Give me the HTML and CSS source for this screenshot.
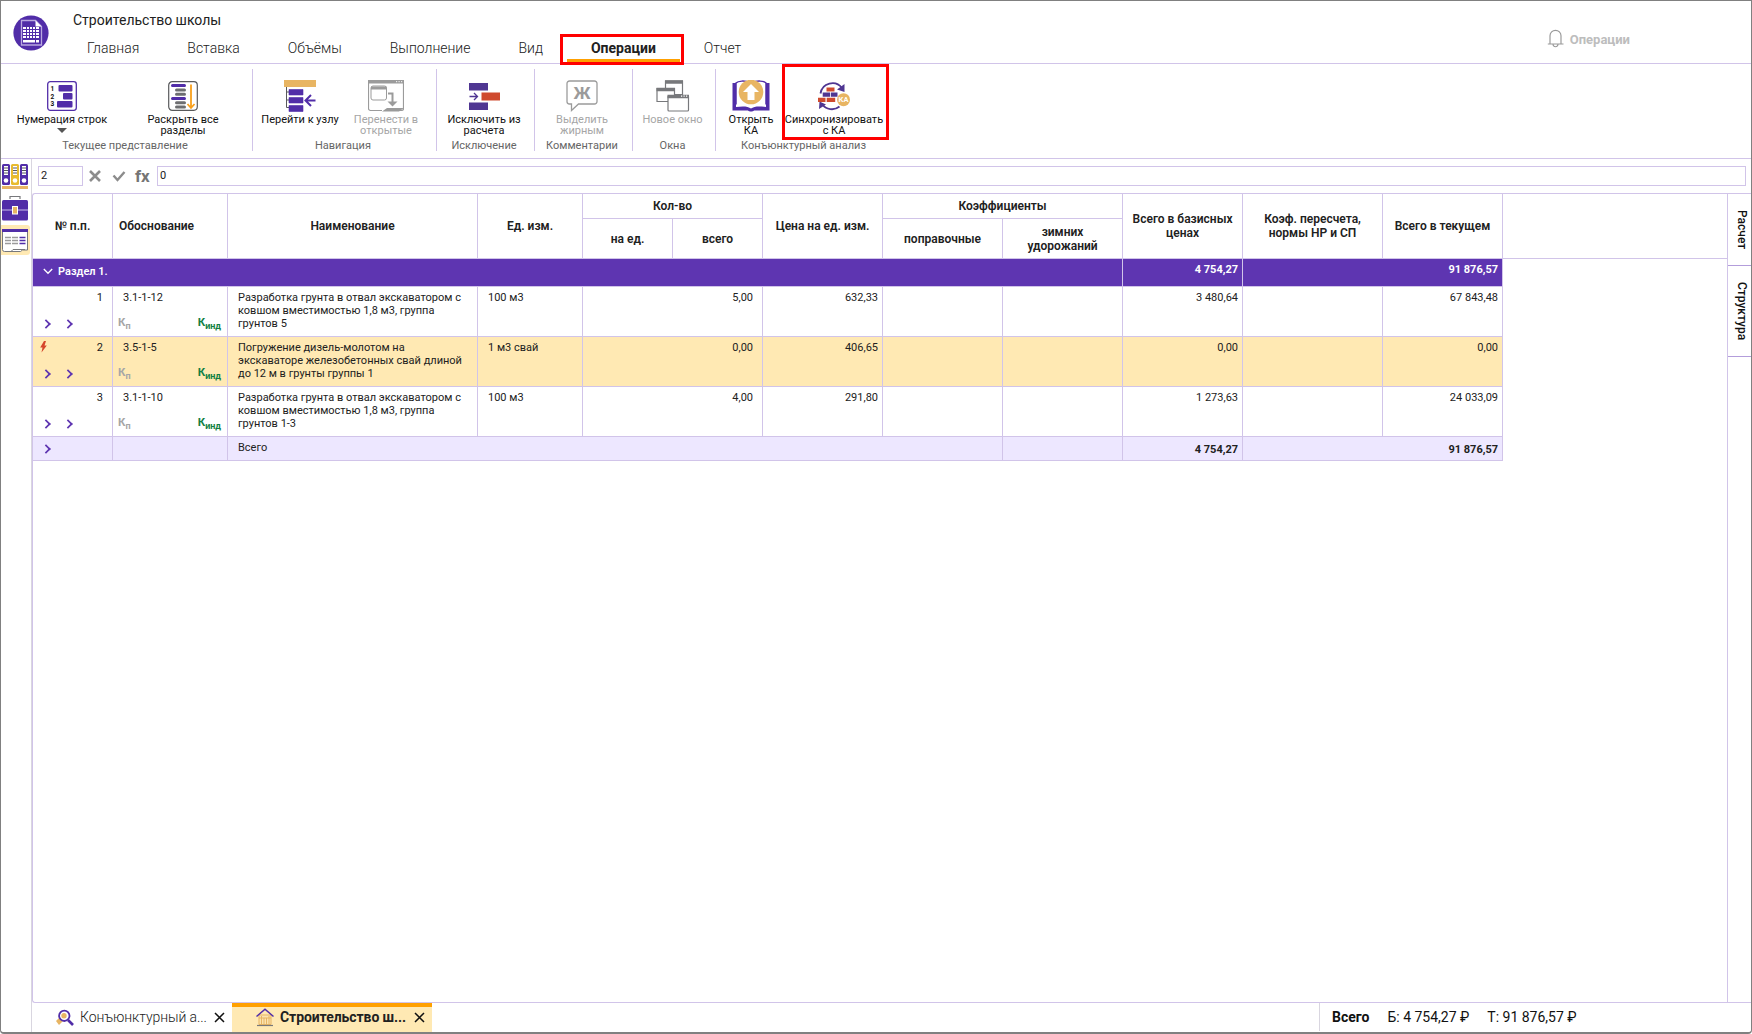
FILE: index.html
```html
<!DOCTYPE html>
<html lang="ru">
<head>
    <meta charset="UTF-8">
    <title>Строительство школы</title>
    <link rel="stylesheet" href="styles.css">
</head>
<body>
<div class="window">
    <header class="header">
        <svg class="logo" width="36" height="36" viewBox="0 0 36 36">
            <circle cx="18" cy="18" r="17.6" fill="#512da8"/>
            <path d="M8.500 5.500h14l6 6v18.500h-20z" fill="none" stroke="#b9a8e0" stroke-width="1.300"/>
            <path d="M22.500 5.500v6h6z" fill="#fff"/>
            <path d="M10 12h16v11h-16zM10 25h16v2.500h-16z" fill="#fff"/>
            <path d="M10 14.500h16M10 17.500h16M10 20.500h16M13.500 12v11M16.500 12v11M19.500 12v11M22.500 12v16" stroke="#512da8" stroke-width="1"/>
        </svg>
        <div class="header-main">
            <div class="title">Строительство школы</div>
            <nav class="menu">
                <a>Главная</a>
                <a>Вставка</a>
                <a>Объёмы</a>
                <a>Выполнение</a>
                <a>Вид</a>
                <a class="active">Операции</a>
                <a>Отчет</a>
            </nav>
        </div>
        <div class="notify">
            <svg width="18" height="19" viewBox="0 0 18 19" fill="none" stroke="#9a9a9a" stroke-width="1.200">
                <path d="M.8 15h15.700M3 15V6.800a5.500 5.500 0 0 1 11 0V15M6 15.500c.5 3 4.500 3 5 0"/>
            </svg>
            <span>Операции</span>
        </div>
    </header>

    <!-- Ribbon -->
    <div class="ribbon">
        <div class="group g-view">
            <div class="buttons">
                <div class="btn">
                    <svg width="32" height="32" viewBox="0 0 32 32">
                        <rect x="1.700" y="1.700" width="28.600" height="28.600" rx="2.500" fill="#fff" stroke="#512da8" stroke-width="1.300"/>
                        <g fill="#512da8"><rect x="12.500" y="5" width="14" height="6.500" rx="1"/><rect x="17" y="13" width="9.500" height="6.500" rx="1"/><rect x="11" y="21" width="15.500" height="6.500" rx="1"/></g>
                        <g class="ico-num"><text x="4.500" y="11">1</text><text x="4.500" y="18.500">2</text><text x="4.500" y="26">3</text></g>
                    </svg>
                    <span>Нумерация строк</span>
                    <i class="caret"></i>
                </div>
                <div class="btn">
                    <svg width="32" height="32" viewBox="0 0 32 32">
                        <rect x="1.700" y="1.700" width="28.600" height="28.600" rx="3.500" fill="#fff" stroke="#58595b" stroke-width="1.200"/>
                        <path d="M5.500 5.500h12M5.500 18.500h12" stroke="#512da8" stroke-width="3" stroke-linecap="round"/>
                        <path d="M9.500 10h8M9.500 14.200h8M9.500 22.800h8M9.500 27h8" stroke="#6d6e71" stroke-width="3" stroke-linecap="round"/>
                        <path d="M24 4.500v23M20.500 24l3.500 4 3.500-4" fill="none" stroke="#f9a01b" stroke-width="1.800"/>
                    </svg>
                    <span>Раскрыть все<br>разделы</span>
                </div>
            </div>
            <div class="caption">Текущее представление</div>
        </div>
        <div class="group g-nav">
            <div class="buttons">
                <div class="btn">
                    <svg width="32" height="32" viewBox="0 0 32 32">
                        <rect width="32" height="7" fill="#e8b563"/>
                        <path d="M2.500 7v20.500h3M2.500 12h3M2.500 20h3" fill="none" stroke="#58595b"/>
                        <path d="M5 9.500h14v5.500h-14zM5 17.500h14v5.500h-14zM5 25.500h14v6h-14z" fill="#512da8" stroke="#512da8" stroke-width=".6"/>
                        <path d="M31.500 20.500h-10M27 15l-5.500 5.500 5.500 5.500" fill="none" stroke="#512da8" stroke-width="2"/>
                    </svg>
                    <span>Перейти к узлу</span>
                </div>
                <div class="btn disabled">
                    <svg width="36" height="32" viewBox="0 0 36 32" fill="none" stroke="#9b9b9b">
                        <path d="M14 30.500H2.500a2 2 0 0 1-2-2V1h35v27.500a2 2 0 0 1-2 2H28" stroke-width="1.200"/>
                        <path d="M0 0h36v3.500H0zM14 31.500l5-3.500h17l-5 3.500z" fill="#9b9b9b" stroke="none"/>
                        <path d="M28 1.700h1.200M30.500 1.700h1.200M33 1.700h1.200" stroke="#fff"/>
                        <rect x="3" y="6" width="15.500" height="14" rx="2"/>
                        <path d="M3 8h15.500" stroke-width="3"/>
                        <path d="M20 13.500h4.500v10" stroke-width="2"/><path d="M19.500 21.500h10l-5 5z" fill="#9b9b9b" stroke="none"/>
                    </svg>
                    <span>Перенести в<br>открытые</span>
                </div>
            </div>
            <div class="caption">Навигация</div>
        </div>
        <div class="group g-excl">
            <div class="buttons">
                <div class="btn">
                    <svg width="32" height="32" viewBox="0 0 32 32">
                        <path d="M1 3h19v7.500H1zM1 22.500h19V30H1z" fill="#4f3692"/>
                        <rect x="13.500" y="12.500" width="18.500" height="8" fill="#cf4a2e"/>
                        <path d="M1.500 16.500h8M6 13l3.500 3.500L6 20" fill="none" stroke="#4f3692" stroke-width="1.300"/>
                    </svg>
                    <span>Исключить из<br>расчета</span>
                </div>
            </div>
            <div class="caption">Исключение</div>
        </div>
        <div class="group g-comm">
            <div class="buttons">
                <div class="btn disabled">
                    <svg width="32" height="32" viewBox="0 0 32 32">
                        <path d="M3.500 1h25a2.500 2.500 0 0 1 2.500 2.500v18a2.500 2.500 0 0 1-2.500 2.500H12.500l-7 6.500V24h-2A2.500 2.500 0 0 1 1 21.500v-18A2.500 2.500 0 0 1 3.500 1z" fill="#fff" stroke="#9b9b9b" stroke-width="1.300"/>
                        <text class="ico-bold" x="16" y="18.500">Ж</text>
                    </svg>
                    <span>Выделить<br>жирным</span>
                </div>
            </div>
            <div class="caption">Комментарии</div>
        </div>
        <div class="group g-win">
            <div class="buttons">
                <div class="btn disabled">
                    <svg width="34" height="32" viewBox="0 0 34 32" fill="#fff" stroke="#77787b" stroke-width="1.200">
                        <path d="M9.500 1h17v13.500h-17z"/><path d="M9 2h18" stroke-width="3.500"/>
                        <path d="M1 8.500h17.500v13H1z"/><path d="M.5 9.500H19" stroke-width="3.500"/>
                        <rect x="12" y="15.500" width="20.500" height="15.500" rx="1"/><path d="M11.500 16.500h21.500" stroke-width="3.500"/>
                        <path d="M25 16.200h1.200M27.500 16.200h1.200M30 16.200h1.200" stroke="#fff"/>
                    </svg>
                    <span>Новое окно</span>
                </div>
            </div>
            <div class="caption">Окна</div>
        </div>
        <div class="group g-ka">
            <div class="buttons">
                <div class="btn">
                    <svg width="38" height="32" viewBox="0 0 38 32">
                        <path d="M.5 3H4V27c6-1 12-1 15 1.500C22 26 28 26 34 27V3h3.500v27.500H22c-1 1.300-5 1.300-6 0H.5z" fill="#512da8"/>
                        <path d="M4 24.500V3C6 1 13 0 18 3M34 24.500V3C32 1 25 0 20 3" fill="none" stroke="#512da8" stroke-width="1.500"/>
                        <circle cx="19" cy="12" r="12.300" fill="#e8b563"/>
                        <path d="M19 4l8 8h-4.500v8h-7v-8H11z" fill="#fff"/>
                    </svg>
                    <span>Открыть<br>КА</span>
                </div>
                <div class="btn">
                    <svg width="32" height="32" viewBox="0 0 32 32">
                        <path d="M2.500 13.500A12 12 0 0 1 24 8M21.500 26.500A12 12 0 0 1 4 24" fill="none" stroke="#4f3692" stroke-width="1.800"/>
                        <path d="M26.500 4v8l-7.500-2.500zM1 29l.5-7.500 6.500 3z" fill="#4f3692"/>
                        <path d="M8.500 7.500h8v4h-8zM0 17.700h7.500V22H0zM8.700 17.700h8.500V22H8.700z" fill="#cf4a2e"/>
                        <path d="M4.700 12.500h7.500v4.200H4.700zM13 12.500h6.500v4.200H13z" fill="#4f3692"/>
                        <circle cx="25.500" cy="19.700" r="6.500" fill="#e8b563"/>
                        <text class="ico-ka" x="25.500" y="22.300">КА</text>
                    </svg>
                    <span>Синхронизировать<br>с КА</span>
                </div>
            </div>
            <div class="caption">Конъюнктурный анализ</div>
        </div>
    </div>

    <div class="workspace">
        <aside class="rail">
            <div class="rail-item">
                <svg width="26" height="26" viewBox="0 0 26 26">
                    <rect x="0" y="0" width="8" height="21" rx="1.500" fill="#512da8"/><rect x="9" y="0" width="8" height="21" rx="1.500" fill="#e8bb2e"/><rect x="18" y="0" width="8" height="21" rx="1.500" fill="#512da8"/>
                    <path d="M2 2h4v9H2zM11 2h4v9h-4zM20 2h4v9h-4z" fill="#fff"/>
                    <path d="M2 4h4M2 6.500h4M2 9h4M11 4h4M11 6.500h4M11 9h4M20 4h4M20 6.500h4M20 9h4" stroke="#58595b"/>
                    <g fill="#fff"><circle cx="4" cy="16.500" r="2.300"/><circle cx="13" cy="16.500" r="2.300"/><circle cx="22" cy="16.500" r="2.300"/></g>
                    <rect y="22" width="26" height="3" fill="#e8b563"/>
                </svg>
            </div>
            <div class="rail-item">
                <svg width="26" height="26" viewBox="0 0 26 26">
                    <path d="M8 4V1.500h10V4" fill="none" stroke="#77787b" stroke-width="1.200"/>
                    <rect y="5" width="26" height="20.500" rx="1.500" fill="#512da8"/>
                    <path d="M0 15h26" stroke="#c9bdea" stroke-width="1"/>
                    <rect x="10.500" y="11.500" width="5" height="7.500" fill="#e8b563" stroke="#fff"/>
                </svg>
            </div>
            <div class="rail-item current">
                <svg width="26" height="26" viewBox="0 0 26 26">
                    <path d="M.5 3h25v19h-5l-2 1.500H2.500a2 2 0 0 1-2-2z" fill="#fff" stroke="#77787b"/>
                    <path d="M0 1h26v3H0z" fill="#512da8"/>
                    <path d="M3 9.500h6M3 12.500h6M3 15.500h6M10 9.500h6M10 12.500h6M10 15.500h6" stroke="#9b9b9b" stroke-width="1.300"/>
                    <path d="M17.500 9.500h6M17.500 12.500h6M17.500 15.500h6" stroke="#512da8" stroke-width="1.600"/>
                    <path d="M9 23.500l2-2h12" fill="none" stroke="#77787b"/>
                </svg>
            </div>
        </aside>

        <div class="content">
            <div class="formula">
                <div class="cell-no">2</div>
                <svg class="f-cancel" width="14" height="14" viewBox="0 0 14 14"><path d="M2 2l10 10M12 2L2 12" stroke="#8c8c8c" stroke-width="2.600"/></svg>
                <svg class="f-ok" width="14" height="12" viewBox="0 0 14 12"><path d="M1.500 5.500l4 4.500 7-8" fill="none" stroke="#8c8c8c" stroke-width="2.400"/></svg>
                <span class="fx">fx</span>
                <div class="f-input">0</div>
            </div>

            <div class="panels">
                <div class="sheet">
                    <div class="filler"></div>
                    <table class="grid">
                        <colgroup>
                            <col class="w80"><col class="w115"><col class="w250"><col class="w105"><col class="w90"><col class="w90">
                            <col class="w120"><col class="w120"><col class="w120"><col class="w120"><col class="w140"><col class="w120">
                        </colgroup>
                        <thead>
                            <tr class="h1">
                                <th rowspan="2">№ п.п.</th>
                                <th rowspan="2" class="left">Обоснование</th>
                                <th rowspan="2">Наименование</th>
                                <th rowspan="2">Ед. изм.</th>
                                <th colspan="2">Кол-во</th>
                                <th rowspan="2">Цена на ед. изм.</th>
                                <th colspan="2">Коэффициенты</th>
                                <th rowspan="2">Всего в базисных<br>ценах</th>
                                <th rowspan="2">Коэф. пересчета,<br>нормы НР и СП</th>
                                <th rowspan="2">Всего в текущем</th>
                            </tr>
                            <tr class="h2">
                                <th>на ед.</th>
                                <th>всего</th>
                                <th>поправочные</th>
                                <th>зимних<br>удорожаний</th>
                            </tr>
                        </thead>
                        <tbody>
                            <tr class="section">
                                <td colspan="9"><div class="sec-name"><svg width="10" height="7" viewBox="0 0 10 7"><path d="M.8 1L5 5.300 9.200 1" fill="none" stroke="#fff" stroke-width="1.300"/></svg>Раздел 1.</div></td>
                                <td class="num">4 754,27</td>
                                <td colspan="2" class="num">91 876,57</td>
                            </tr>
                            <tr class="row">
                                <td><div class="pp"><span class="n">1</span><span class="arrows"><i></i><i></i></span></div></td>
                                <td><div class="code"><span>3.1-1-12</span><span class="k"><b>К<sub>п</sub></b><b class="green">К<sub>инд</sub></b></span></div></td>
                                <td class="name">Разработка грунта в отвал экскаватором с ковшом вместимостью 1,8 м3, группа грунтов 5</td>
                                <td class="name">100 м3</td>
                                <td colspan="2" class="num qty">5,00</td>
                                <td class="num">632,33</td>
                                <td></td>
                                <td></td>
                                <td class="num">3 480,64</td>
                                <td></td>
                                <td class="num">67 843,48</td>
                            </tr>
                            <tr class="row selected">
                                <td><div class="pp"><svg class="bolt" width="7" height="12" viewBox="0 0 7 12"><path d="M4 0L.2 6.500h2.300L1.500 11.500 6.800 4.500H4.500L6 0z" fill="#d5452b"/></svg><span class="n">2</span><span class="arrows"><i></i><i></i></span></div></td>
                                <td><div class="code"><span>3.5-1-5</span><span class="k"><b>К<sub>п</sub></b><b class="green">К<sub>инд</sub></b></span></div></td>
                                <td class="name">Погружение дизель-молотом на экскаваторе железобетонных свай длиной до 12 м в грунты группы 1</td>
                                <td class="name">1 м3 свай</td>
                                <td colspan="2" class="num qty">0,00</td>
                                <td class="num">406,65</td>
                                <td></td>
                                <td></td>
                                <td class="num">0,00</td>
                                <td></td>
                                <td class="num">0,00</td>
                            </tr>
                            <tr class="row">
                                <td><div class="pp"><span class="n">3</span><span class="arrows"><i></i><i></i></span></div></td>
                                <td><div class="code"><span>3.1-1-10</span><span class="k"><b>К<sub>п</sub></b><b class="green">К<sub>инд</sub></b></span></div></td>
                                <td class="name">Разработка грунта в отвал экскаватором с ковшом вместимостью 1,8 м3, группа грунтов 1-3</td>
                                <td class="name">100 м3</td>
                                <td colspan="2" class="num qty">4,00</td>
                                <td class="num">291,80</td>
                                <td></td>
                                <td></td>
                                <td class="num">1 273,63</td>
                                <td></td>
                                <td class="num">24 033,09</td>
                            </tr>
                            <tr class="total">
                                <td><span class="arrows"><i></i></span></td>
                                <td></td>
                                <td colspan="5" class="name">Всего</td>
                                <td></td>
                                <td></td>
                                <td class="num">4 754,27</td>
                                <td colspan="2" class="num">91 876,57</td>
                            </tr>
                        </tbody>
                    </table>
                </div>
                <aside class="side-tabs">
                    <div class="side-tab calc">Расчет</div>
                    <div class="side-tab struct">Структура</div>
                </aside>
            </div>

            <footer class="footer">
                <div class="doc-tab">
                    <svg width="18" height="17" viewBox="0 0 18 17">
                        <path d="M0 12l5-5 3 4-5 5z" fill="#e8b563"/>
                        <circle cx="8.300" cy="6.800" r="5.200" fill="#fff" stroke="#512da8" stroke-width="1.800"/>
                        <circle cx="8" cy="6.800" r="2.700" fill="#e8b563"/>
                        <path d="M12 11l5 5" stroke="#512da8" stroke-width="2.600"/>
                    </svg>
                    <span>Конъюнктурный а...</span>
                    <svg class="close" width="11" height="11" viewBox="0 0 11 11"><path d="M1 1l9 9M10 1l-9 9" stroke="#111" stroke-width="1.500"/></svg>
                </div>
                <div class="doc-tab open">
                    <svg width="18" height="19" viewBox="0 0 18 19">
                        <path d="M3 7h12v9.500H3z" fill="#fbe3b0" stroke="#e8b563"/>
                        <path d="M5.500 8v8M8 10v6M10.500 10v6M13 8v8M3 10h12" stroke="#e8b563"/>
                        <path d="M.5 8.500L9 1.200l8.500 7.300" fill="none" stroke="#512da8" stroke-width="1.500"/>
                        <path d="M1 17.500h16" stroke="#77787b" stroke-width="1.200"/>
                    </svg>
                    <span>Строительство ш...</span>
                    <svg class="close" width="11" height="11" viewBox="0 0 11 11"><path d="M1 1l9 9M10 1l-9 9" stroke="#111" stroke-width="1.500"/></svg>
                </div>
                <div class="sums">
                    <b>Всего</b><span>Б: 4 754,27 ₽</span><span>Т: 91 876,57 ₽</span>
                </div>
            </footer>
        </div>
    </div>

    <div class="mark mark-tab"></div>
    <div class="mark mark-sync"></div>
</div>
</body>
</html>
```
FILE: styles.css
```css
* { box-sizing: border-box; }
body { margin: 0; font-family: Roboto, "Liberation Sans", sans-serif; font-size: 11px; color: #212121; background: #fff; }
svg { display: block; flex: none; }

.window { position: relative; width: 1752px; height: 1034px; border: 1px solid #808080; border-bottom-width: 2px; border-radius: 0 0 4px 4px; display: flex; flex-direction: column; overflow: hidden; }

/* Header */
.header { height: 63px; flex: none; display: flex; border-bottom: 1px solid #d1c4e9; }
.logo { margin: 14px 0 0 12px; }
.header-main { margin-left: 14px; display: flex; flex-direction: column; }
.title { padding: 11px 0 0 10px; height: 36px; font-size: 14px; line-height: 17px; }
.menu { display: flex; height: 26px; font-size: 14px; font-weight: 300; line-height: 23px; }
.menu a { height: 26px; padding: 0 24px; border-bottom: 4px solid transparent; }
.menu a.active { font-weight: 700; border-bottom-color: #ffa000; }
.notify { margin: 28px 121px 0 auto; display: flex; gap: 5px; font-size: 13px; line-height: 22px; font-weight: 700; color: #bdbdbd; }

/* Ribbon */
.ribbon { height: 95px; flex: none; display: flex; padding-top: 5px; border-bottom: 1px solid #d1c4e9; }
.group { height: 82px; display: flex; flex-direction: column; justify-content: space-between; border-right: 1px solid #d1c4e9; }
.group:last-child { border-right: 0; }
.buttons { display: flex; height: 69px; padding-top: 11px; }
.btn { display: flex; flex-direction: column; align-items: center; text-align: center; line-height: 11px; white-space: nowrap; color: #111; }
.btn span { margin-top: 2px; }
.btn.disabled { color: #a6a6a6; }
.caption { text-align: center; height: 13px; line-height: 15px; color: #666; }
.caret { margin-top: 3px; border: 5px solid transparent; border-top-color: #555; border-bottom: 0; }
.g-view { padding: 0 6px 0 3px; }
.g-view .btn { width: 116px; }
.g-view .btn + .btn { width: 126px; }
.g-nav { padding: 0 7px 0 4px; }
.g-nav .btn { width: 86px; }
.g-excl, .g-comm { width: 98px; padding-right: 3px; }
.g-excl .btn, .g-comm .btn { width: 94px; }
.g-win { width: 83px; padding-right: 3px; }
.g-win .btn { width: 79px; }
.g-ka { padding-left: 3px; }
.g-ka .btn { width: 64px; }
.g-ka .btn + .btn { width: 102px; }
.g-ka .caption { padding-left: 3px; }
.ico-num { font-size: 6.5px; font-weight: 700; fill: #111; }
.ico-bold { font-size: 17px; font-weight: 700; fill: #9b9b9b; text-anchor: middle; }
.ico-ka { font-size: 7.5px; font-weight: 700; fill: #fff; text-anchor: middle; }

/* Left rail */
.workspace { flex: 1; display: flex; min-height: 0; }
.rail { width: 31px; border-right: 1px solid #d9d6e0; padding-top: 2px; }
.rail-item { width: 29px; height: 30px; margin-bottom: 1px; padding: 3px 0 0 1px; }
.rail-item.current { margin-top: 3px; background: #ffe9b3; border-radius: 0 3px 3px 0; }

/* Formula bar */
.content { flex: 1; display: flex; flex-direction: column; min-width: 0; }
.formula { height: 34px; flex: none; display: flex; align-items: center; padding: 0 5px 1px 6px; }
.cell-no, .f-input { height: 20px; border: 1px solid #d1c4e9; padding-left: 2px; line-height: 17px; }
.cell-no { width: 45px; }
.f-input { flex: 1; margin-left: 5px; }
.f-cancel { margin-left: 5px; }
.f-ok { margin-left: 10px; }
.fx { margin-left: 9px; width: 17px; font-size: 17px; font-weight: 700; color: #757575; }

/* Table */
.panels { flex: 1; display: flex; min-height: 0; }
.sheet { position: relative; flex: 1; border: 1px solid #d1c4e9; border-right: 0; border-radius: 3px 0 0 3px; }
.filler { position: absolute; top: 0; left: 0; right: 0; height: 65px; border-bottom: 1px solid #d1c4e9; }
.grid { position: relative; width: 1470px; table-layout: fixed; border-spacing: 0; }
.w80 { width: 80px; }
.w90 { width: 90px; }
.w105 { width: 105px; }
.w115 { width: 115px; }
.w120 { width: 120px; }
.w140 { width: 140px; }
.w250 { width: 250px; }
.grid th, .grid td { padding: 0; border-right: 1px solid #d1c4e9; border-bottom: 1px solid #d1c4e9; }
.grid th { font-size: 12px; font-weight: 600; line-height: 14px; }
.grid th.left { text-align: left; padding-left: 6px; }
.h1 { height: 25px; }
.h2 { height: 40px; }
.row { height: 50px; }
.row td { height: 50px; vertical-align: top; line-height: 13px; padding-top: 4px; }
.grid td.num { text-align: right; padding-right: 4px; }
.grid td.qty { padding-right: 9px; }
.grid td.name { padding-left: 10px; padding-right: 12px; }
.row.selected td { background: #ffe9b3; }
.section td { height: 28px; background: #5e35b1; color: #fff; font-weight: 600; vertical-align: top; line-height: 13px; padding-top: 4px; }
.section td.num, .total td.num { font-weight: 700; }
.sec-name { display: flex; align-items: center; gap: 5px; padding: 2px 0 0 10px; }
.total td { height: 24px; background: #ede7ff; vertical-align: top; line-height: 13px; padding-top: 4px; }
.total td:nth-child(3) { border-right: 0; }
.total td.num { padding-top: 6px; }
.pp { position: relative; height: 45px; text-align: right; padding-right: 9px; }
.pp .arrows { position: absolute; left: 0; top: 27px; }
.bolt { position: absolute; left: 7px; top: 0; }
.arrows { display: flex; gap: 14px; padding: 2px 0 0 9px; }
.arrows i { width: 8px; height: 8px; border: solid #5e35b1; border-width: 2px 2px 0 0; transform: rotate(45deg) scale(0.85); }
.total .arrows { padding-top: 4px; }
.code { display: flex; flex-direction: column; padding: 0 6px 0 5px; }
.code > span:first-child { padding-left: 5px; }
.k { display: flex; justify-content: space-between; margin-top: 11px; color: #a6a6a6; }
.k b { font-size: 11.5px; font-weight: 700; line-height: 14px; }
.k sub { font-size: 9px; font-weight: 700; line-height: 0; vertical-align: -3px; }
.k .green { color: #138043; }

/* Right tabs */
.side-tabs { width: 24px; flex: none; border: 1px solid #d1c4e9; border-right: 0; }
.side-tab { writing-mode: vertical-rl; width: 23px; line-height: 19px; font-size: 12px; font-weight: 500; color: #111; border-bottom: 1px solid #b39ddb; text-align: left; }
.calc { height: 72px; padding-top: 16px; }
.struct { height: 91px; padding-top: 16px; }

/* Footer */
.footer { height: 29px; flex: none; display: flex; font-size: 14px; }
.doc-tab { width: 200px; display: flex; align-items: center; padding: 0 7px 1px 24px; font-weight: 300; }
.doc-tab span { margin-left: 6px; white-space: nowrap; letter-spacing: -0.08px; }
.doc-tab .close { margin: 1px 0 0 auto; }
.doc-tab.open { background: #ffe9b3; border-top: 4px solid #ffa000; font-weight: 700; padding-bottom: 5px; }
.sums { margin-left: auto; width: 432px; height: 28px; border-left: 1px solid #d9d6e0; padding-left: 12px; line-height: 28px; color: #111; }
.sums span { margin-left: 18px; }

/* Red frames */
.mark { position: absolute; border: 3px solid #ff0000; }
.mark-tab { left: 559px; top: 33px; width: 124px; height: 31px; }
.mark-sync { left: 781px; top: 63px; width: 107px; height: 76px; }
```
